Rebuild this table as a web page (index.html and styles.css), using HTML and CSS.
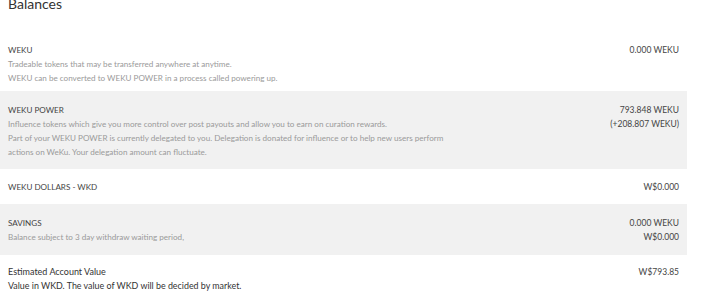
FILE: index.html
```html
<!DOCTYPE html>
<html>
<head>
<meta charset="utf-8">
<link rel="stylesheet" href="styles.css">
</head>
<body>
<div class="wallet">
  <h2 class="heading">Balances</h2>
  <div class="rows">
    <div class="row first">
      <div class="info">
        <div class="title">WEKU</div>
        <div class="desc">Tradeable tokens that may be transferred anywhere at anytime.</div>
        <div class="desc">WEKU can be converted to WEKU POWER in a process called powering up.</div>
      </div>
      <div class="values">
        <div>0.000 WEKU</div>
      </div>
    </div>
    <div class="row shaded">
      <div class="info">
        <div class="title">WEKU POWER</div>
        <div class="desc">Influence tokens which give you more control over post payouts and allow you to earn on curation rewards.</div>
        <div class="desc">Part of your WEKU POWER is currently delegated to you. Delegation is donated for influence or to help new users perform<br>actions on WeKu. Your delegation amount can fluctuate.</div>
      </div>
      <div class="values">
        <div>793.848 WEKU</div>
        <div>(+208.807 WEKU)</div>
      </div>
    </div>
    <div class="row">
      <div class="info">
        <div class="title">WEKU DOLLARS - WKD</div>
      </div>
      <div class="values">
        <div>W$0.000</div>
      </div>
    </div>
    <div class="row shaded">
      <div class="info">
        <div class="title">SAVINGS</div>
        <div class="desc">Balance subject to 3 day withdraw waiting period,</div>
      </div>
      <div class="values">
        <div>0.000 WEKU</div>
        <div>W$0.000</div>
      </div>
    </div>
    <div class="row estimate">
      <div class="info">
        <div class="title">Estimated Account Value</div>
        <div class="desc">Value in WKD. The value of WKD will be decided by market.</div>
      </div>
      <div class="values">
        <div>W$793.85</div>
      </div>
    </div>
  </div>
</div>
</body>
</html>
```

FILE: styles.css
```css
html, body {
  margin: 0;
  padding: 0;
  background: #ffffff;
}

body {
  font-family: Lato, "Open Sans", sans-serif;
  color: #444;
}

.wallet {
  width: 687px;
}

.heading {
  margin: -5px 0 0 0;
  padding: 0 8px;
  font-size: 14px;
  font-weight: 400;
  line-height: 18px;
  color: #333;
  height: 33px;
}

.rows {
  display: flex;
  flex-direction: column;
}

.row {
  display: flex;
  justify-content: space-between;
  align-items: flex-start;
  padding: 11px 8px 9px;
}

.row.first {
  padding: 15px 8px 5px;
}

.row.shaded {
  background: #f1f1f1;
  padding: 12px 8px 10px;
}

.row.estimate {
  padding-top: 10px;
}

.title {
  font-size: 8.1px;
  line-height: 14px;
  color: #444;
}

.desc {
  font-size: 8.1px;
  line-height: 14.3px;
  color: #9a9a9a;
}

.estimate .title {
  font-size: 9px;
  color: #333;
}

.estimate .desc {
  font-size: 8.9px;
  color: #333;
}

.values {
  font-size: 8.5px;
  line-height: 14.5px;
  color: #444;
  text-align: right;
  white-space: nowrap;
}
```
